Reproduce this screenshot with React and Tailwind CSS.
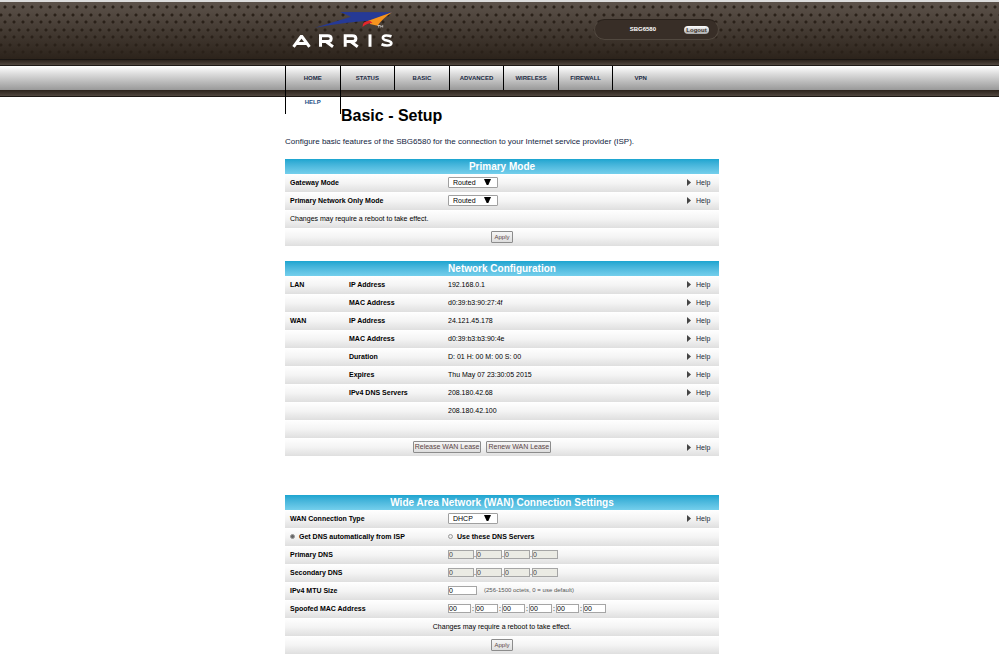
const NAV = ["HOME", "STATUS", "BASIC", "ADVANCED", "WIRELESS", "FIREWALL", "VPN", "HELP"];

const NETWORK = [
  ["LAN", "IP Address", "192.168.0.1", true],
  ["", "MAC Address", "d0:39:b3:90:27:4f", true],
  ["WAN", "IP Address", "24.121.45.178", true],
  ["", "MAC Address", "d0:39:b3:b3:90:4e", true],
  ["", "Duration", "D: 01 H: 00 M: 00 S: 00", true],
  ["", "Expires", "Thu May 07 23:30:05 2015", true],
  ["", "IPv4 DNS Servers", "208.180.42.68", true],
  ["", "", "208.180.42.100", false],
  ["", "", "", false],
];

const ROW = "h-[18px] bg-linear-to-b from-white via-[#f4f4f4] to-[#dfdfdf]";

function Logo() {
  return (
    <a href="#home" aria-label="ARRIS" className="block w-[110px]">
      <svg viewBox="0 0 110 40" className="block h-10 w-[110px]">
        <path d="M30 17.800 L66 6.800 L55 2 L107 2.300 L84 10.800 Q60 12.500 30 17.800 Z" fill="#263a96" />
        <path d="M107 2.300 L82 11.300 Q86 11.500 85 14 L92.500 15.800 Q97 9 107 2.300 Z" fill="#f7941e" />
        <path d="M77.500 17 Q77.500 10.800 85 10.800 L87.500 13 Q82 13 77.500 17 Z" fill="#e4252b" />
        <path d="M92.500 15.500h2.500M93.700 15.500v2M95.700 17.500v-2l1 1l1-1v2" stroke="#fff" strokeWidth="0.6" fill="none" />
        <g fill="none" stroke="#fff" strokeWidth="3">
          <path d="M8.500 36.800 L16.500 26 L24.500 36.800 M11 33.400 H22" strokeLinejoin="bevel" />
          <path d="M35.500 36.800 V25.800 H42.500 Q46.200 25.800 46.200 28.600 Q46.200 31.600 42.500 31.600 H35.500 M41 31.600 L48 36.800" />
          <path d="M60.200 36.800 V25.800 H67.200 Q70.900 25.800 70.900 28.600 Q70.900 31.600 67.200 31.600 H60.200 M65.700 31.600 L72.700 36.800" />
          <path d="M85 24.400 V36.800" />
          <path d="M106.500 26.400 Q103.500 25.400 101 25.500 Q97.700 25.700 97.900 28 Q98 29.700 102 30.500 Q106.700 31.500 106.300 33.600 Q106 35.500 102 35.500 Q99 35.400 96.500 34.300" strokeWidth="2.700" />
        </g>
      </svg>
    </a>
  );
}

function Help() {
  return (
    <a href="#help" className="flex w-8 items-center gap-[5px] text-[7px] text-[#1b2a38]">
      <svg viewBox="0 0 4 7" className="h-[7px] w-1 shrink-0">
        <path d="M0 0 L4 3.500 L0 7 Z" fill="#444" />
      </svg>
      Help
    </a>
  );
}

function Section({ title, children, className = "" }) {
  return (
    <section className={className}>
      <h2 className="h-[15px] bg-linear-to-b from-[#1aa5d0] to-[#74cfec] text-center text-[10px] leading-[15px] font-bold text-white">
        {title}
      </h2>
      {children}
    </section>
  );
}

function FormRow({ label, id, help, children }) {
  return (
    <div className={`flex items-center pb-[2px] pl-[5px] ${ROW}`}>
      <label htmlFor={id} className="w-[158px] shrink-0 font-bold">
        {label}
      </label>
      <div className="flex flex-1 items-center">{children}</div>
      {help && <Help />}
    </div>
  );
}

function Select({ id, value }) {
  return (
    <div className="relative">
      <select
        id={id}
        defaultValue={value}
        className="block h-[11px] w-[50px] appearance-none rounded-[1px] border border-[#a0a0a0] bg-white pl-1 text-[7px] leading-[9px] text-black"
      >
        <option>{value}</option>
      </select>
      <svg viewBox="0 0 7 6" className="pointer-events-none absolute top-[2px] right-[7px] h-[6px] w-[7px]">
        <path d="M0 0 H7 L4.300 6 H2.700 Z" fill="#000" />
      </svg>
    </div>
  );
}

function Button({ children, size = "px-[2px] text-[6px]" }) {
  return (
    <button
      type="button"
      className={`h-3 rounded-[1px] border border-[#8c8c8c] bg-linear-to-b from-[#f6f6f6] to-[#dedede] leading-[10px] whitespace-nowrap text-[#5c4545] ${size}`}
    >
      {children}
    </button>
  );
}

function Octets({ id, disabled }) {
  return [0, 1, 2, 3].map((n) => (
    <span key={n} className="flex items-end">
      {n > 0 && <span className="w-[2px] leading-[8px]">.</span>}
      <input
        id={n === 0 ? id : `${id}-${n}`}
        aria-label={`${id} octet ${n + 1}`}
        disabled={disabled}
        defaultValue="0"
        className="h-[9px] w-[26px] border border-[#a5a5a5] bg-[#ebebe4] text-[7px] leading-[7px] text-[#444]"
      />
    </span>
  ));
}

function Radio({ id, label, defaultChecked }) {
  return (
    <>
      <input
        id={id}
        type="radio"
        name="dns"
        defaultChecked={defaultChecked}
        className="size-[5px] shrink-0 appearance-none rounded-full border border-[#999] bg-[#eee] checked:bg-[#666]"
      />
      <label htmlFor={id} className="pl-1 font-bold">
        {label}
      </label>
    </>
  );
}

export default function App() {
  return (
    <div className="min-h-screen bg-white pb-2 font-['Liberation_Sans',Arial,sans-serif] text-[7px] leading-[9px] text-black">
      <header>
        <div className="h-[60px] border-t-2 border-b border-t-[#dcdcdc] border-b-[#1a1613] bg-[radial-gradient(circle_at_5px_5px,#2a2119_0_1px,transparent_2px),radial-gradient(circle_at_5px_5px,#2a2119_0_1px,transparent_2px),linear-gradient(#5c524a,#2c231b)] bg-size-[9px_15px,9px_15px,100%_100%] bg-position-[0_0,-4px_8px,0_0]">
          <div className="mx-auto flex w-[439px] justify-between pt-2 pl-[5px]">
            <Logo />
            <div className="mt-[9px] flex h-[21px] w-[125px] items-center justify-end gap-7 rounded-full border border-[#51483f] border-t-[#2a221c] bg-[#382e27] pr-[9px]">
              <span className="text-[6px] font-bold text-white">SBG6580</span>
              <button
                type="button"
                className="h-2 w-[25px] rounded-full bg-linear-to-b from-white to-[#aaa] text-center text-[6px] leading-[8px] font-bold text-[#3a3029]"
              >
                Logout
              </button>
            </div>
          </div>
        </div>
        <div className="h-[6px] border-b border-[#1d1814] bg-linear-to-b from-[#2c231c] to-[#51473f]" />
        <nav className="h-6 bg-linear-to-b from-white to-[#999]">
          <div className="mx-auto w-[439px] pl-[5px]">
            <ul className="relative grid w-[383px] grid-cols-7 border-l border-black text-center text-[6px] leading-[24px] font-bold">
              {NAV.map((item) => (
                <li key={item} className={item === "VPN" ? "" : "border-r border-black"}>
                  <a href={`#${item.toLowerCase()}`} className={item === "HELP" ? "text-[#1d4f86]" : "text-[#1b2a44]"}>
                    {item}
                  </a>
                </li>
              ))}
            </ul>
          </div>
        </nav>
        <div className="h-[7px] border-b border-[#1d1814] bg-linear-to-b from-[#2c231c] to-[#51473f]" />
      </header>

      <main className="mx-auto w-[439px] pl-[5px]">
        <h1 className="pt-[10px] pl-14 text-[16px] leading-[18px] font-bold">Basic - Setup</h1>
        <p className="pt-3 text-[8px] leading-[10px] text-[#101c40]">
          Configure basic features of the SBG6580 for the connection to your Internet service provider (ISP).
        </p>

        <Section title="Primary Mode" className="mt-3">
          <form>
            <FormRow label="Gateway Mode" id="gateway" help>
              <Select id="gateway" value="Routed" />
            </FormRow>
            <FormRow label="Primary Network Only Mode" id="primary-only" help>
              <Select id="primary-only" value="Routed" />
            </FormRow>
            <p className={`flex items-center pb-[2px] pl-[5px] ${ROW}`}>Changes may require a reboot to take effect.</p>
            <div className={`flex items-center justify-center ${ROW}`}>
              <Button>Apply</Button>
            </div>
          </form>
        </Section>

        <Section title="Network Configuration" className="mt-[15px]">
          <table className="w-full table-fixed border-collapse text-left">
            <colgroup>
              <col className="w-16" />
              <col className="w-[99px]" />
              <col />
              <col className="w-8" />
            </colgroup>
            <tbody>
              {NETWORK.map(([group, name, value, help], i) => (
                <tr key={i} className={ROW}>
                  <th className="p-0 pb-[2px] pl-[5px]">{group}</th>
                  <th className="p-0 pb-[2px]">{name}</th>
                  <td className="p-0 pb-[2px]">{value}</td>
                  <td className="p-0 pb-[2px]">{help && <Help />}</td>
                </tr>
              ))}
            </tbody>
          </table>
          <div className={`flex items-center ${ROW}`}>
            <div className="flex flex-1 justify-center gap-[5px] pr-2">
              <Button size="px-px text-[7px]">Release WAN Lease</Button>
              <Button size="px-px text-[7px]">Renew WAN Lease</Button>
            </div>
            <Help />
          </div>
        </Section>

        <Section title="Wide Area Network (WAN) Connection Settings" className="mt-[39px]">
          <form>
            <FormRow label="WAN Connection Type" id="wan-type" help>
              <Select id="wan-type" value="DHCP" />
            </FormRow>
            <div className={`flex items-center pb-[2px] pl-[5px] ${ROW}`}>
              <div className="flex w-[158px] items-center">
                <Radio id="dns-auto" label="Get DNS automatically from ISP" defaultChecked />
              </div>
              <Radio id="dns-manual" label="Use these DNS Servers" />
            </div>
            <FormRow label="Primary DNS" id="primary-dns">
              <Octets id="primary-dns" disabled />
            </FormRow>
            <FormRow label="Secondary DNS" id="secondary-dns">
              <Octets id="secondary-dns" disabled />
            </FormRow>
            <FormRow label="IPv4 MTU Size" id="mtu">
              <input id="mtu" defaultValue="0" className="h-[9px] w-[29px] border border-[#a5a5a5] bg-white text-[7px] leading-[7px]" />
              <span className="pl-[7px] text-[6px] text-[#555]">(256-1500 octets, 0 = use default)</span>
            </FormRow>
            <FormRow label="Spoofed MAC Address" id="mac">
              {[0, 1, 2, 3, 4, 5].map((n) => (
                <span key={n} className="flex items-center">
                  {n > 0 && <span className="w-1 text-center">:</span>}
                  <input
                    id={n === 0 ? "mac" : `mac-${n}`}
                    aria-label={`MAC byte ${n + 1}`}
                    defaultValue="00"
                    className="h-[9px] w-[23px] border border-[#a5a5a5] bg-white text-[7px] leading-[7px]"
                  />
                </span>
              ))}
            </FormRow>
            <p className={`flex items-center justify-center pb-[2px] ${ROW}`}>Changes may require a reboot to take effect.</p>
            <div className={`flex items-center justify-center ${ROW}`}>
              <Button>Apply</Button>
            </div>
          </form>
        </Section>
      </main>
    </div>
  );
}
